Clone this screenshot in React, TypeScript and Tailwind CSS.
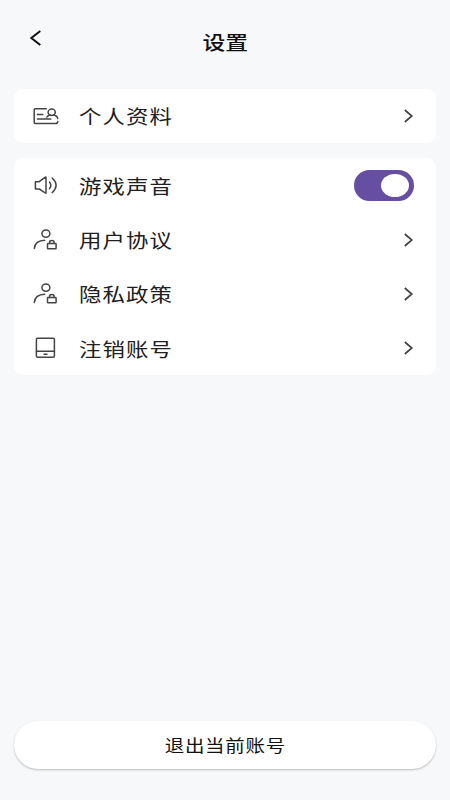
import { useState, type ReactNode } from "react";

function ProfileIcon() {
  return (
    <>
      <path d="M13.3 4.7H2.2Q1.2 4.7 1.2 5.7V18.5Q1.2 19.5 2.2 19.5H22.5Q24.6 19.5 24.8 17.6" />
      <path d="M4.4 10.5H9.8M4.4 15.1H17.8" />
      <ellipse cx="18.7" cy="8.2" rx="3.6" ry="3.2" />
      <path d="M13.8 13.2C14.3 12.2 15.6 11.4 17.2 11.1M20.3 11.1C22.8 11.4 24.4 12.8 24.7 14.6" />
    </>
  );
}

function SoundIcon() {
  return (
    <>
      <path d="M2.4 8.7H6.2L12.4 4.1Q13 3.8 13 4.5V19.7Q13 20.4 12.4 20L6.2 16H2.4Z" />
      <path d="M16.5 9Q19.2 12.4 16.5 15.6M19.2 5Q27 12.2 19.2 19.6" />
    </>
  );
}

function UserLockIcon() {
  return (
    <>
      <ellipse cx="12.9" cy="5.6" rx="4" ry="3.7" />
      <path d="M1.3 20.4C1.8 15.7 5.5 12.5 11.7 12.3" />
      <rect x="14.5" y="15.6" width="8.6" height="5.2" rx="0.6" />
      <path d="M16.6 15.5V14.2Q16.6 12.6 18.8 12.6T21 14.2V15.5" />
    </>
  );
}

function AccountIcon() {
  return (
    <>
      <rect x="3.4" y="2.2" width="18" height="19" rx="1.2" />
      <path d="M3.4 15.2H21.4M11 18.2H14" />
    </>
  );
}

function Chevron() {
  return (
    <svg width="12" height="16" viewBox="0 0 12 16" fill="none" stroke="#444" strokeWidth="1.7" className="mr-[22px]">
      <path d="M2.8 2L9.8 8L2.8 14" />
    </svg>
  );
}

type RowProps = {
  icon: ReactNode;
  label: string;
  children?: ReactNode;
};

function Row({ icon, label, children }: RowProps) {
  return (
    <div className="flex h-[54.2px] items-center pl-[19px]">
      <svg
        width="26"
        height="24"
        viewBox="0 0 26 24"
        fill="none"
        stroke="#444"
        strokeWidth="1.5"
        strokeLinecap="round"
        strokeLinejoin="round"
      >
        {icon}
      </svg>
      <span className="ml-[19.5px] origin-left scale-x-[1.18] pt-px text-[19px] leading-7 tracking-[0.9px] whitespace-nowrap text-[#202020]">
        {label}
      </span>
      <div className="ml-auto">{children ?? <Chevron />}</div>
    </div>
  );
}

export default function App() {
  const [sound, setSound] = useState(true);

  return (
    <div className="flex h-[800px] w-[450px] flex-col bg-[#f7f8fa] px-3.5 font-['Noto_Sans_CJK_SC',sans-serif]">
      <header className="grid h-[88.6px] grid-cols-3 pt-7">
        <button aria-label="返回" className="ml-4 h-5 w-4">
          <svg width="14" height="20" viewBox="0 0 14 20" fill="none" stroke="#111" strokeWidth="2">
            <path d="M10.3 3L1.3 10L10.3 17" />
          </svg>
        </button>
        <h1 className="h-7 scale-x-[1.2] text-center text-[19px] leading-7 font-medium text-[#111]">设置</h1>
      </header>

      <section className="rounded-[9px] bg-white">
        <Row icon={<ProfileIcon />} label="个人资料" />
      </section>

      <section className="mt-[15.6px] rounded-[9px] bg-white">
        <Row icon={<SoundIcon />} label="游戏声音">
          <button
            role="switch"
            aria-checked={sound}
            aria-label="游戏声音"
            onClick={() => setSound(!sound)}
            className={`mr-[22.5px] flex h-[31px] w-[60px] items-center rounded-full px-[4.5px] ${
              sound ? "justify-end bg-[#664fa3]" : "justify-start bg-[#d0d0d6]"
            }`}
          >
            <span className="h-[23px] w-7 rounded-[50%] bg-white" />
          </button>
        </Row>
        <Row icon={<UserLockIcon />} label="用户协议" />
        <Row icon={<UserLockIcon />} label="隐私政策" />
        <Row icon={<AccountIcon />} label="注销账号" />
      </section>

      <button className="mt-auto mb-[31px] h-12 rounded-full bg-white text-[#111] shadow-[0_1px_2px_rgba(0,0,0,0.25)]">
        <span className="inline-block scale-x-[1.18] text-[16.5px] leading-6 tracking-[0.6px]">退出当前账号</span>
      </button>
    </div>
  );
}
